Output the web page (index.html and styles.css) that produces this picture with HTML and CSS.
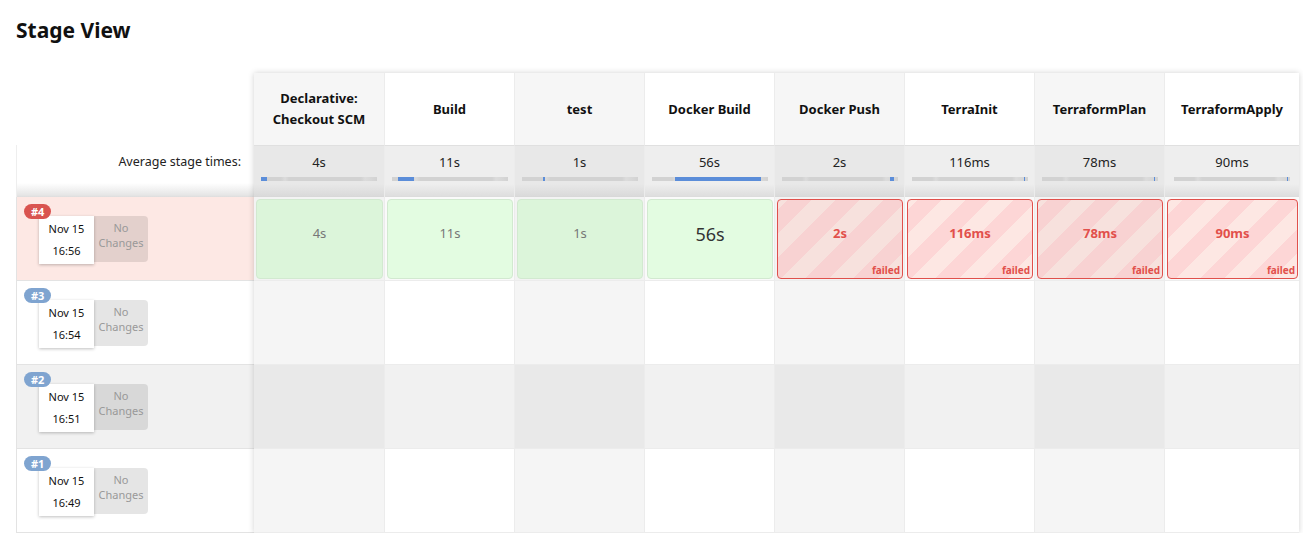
FILE: index.html
```html
<!DOCTYPE html>
<html>
<head>
<meta charset="utf-8">
<link rel="stylesheet" href="styles.css">
</head>
<body>
<h1 class="title">Stage View</h1>
<div class="view">
  <div class="builds">
    <div class="builds-head"></div>
    <div class="builds-avg">Average stage times:</div>
    <div class="build build-failed">
      <div class="card">
        <span class="badge badge-red">#4</span>
        <div class="date"><span>Nov 15</span><span>16:56</span></div>
        <div class="changes">No<br>Changes</div>
      </div>
    </div>
    <div class="build">
      <div class="card">
        <span class="badge">#3</span>
        <div class="date"><span>Nov 15</span><span>16:54</span></div>
        <div class="changes">No<br>Changes</div>
      </div>
    </div>
    <div class="build build-alt">
      <div class="card">
        <span class="badge">#2</span>
        <div class="date"><span>Nov 15</span><span>16:51</span></div>
        <div class="changes">No<br>Changes</div>
      </div>
    </div>
    <div class="build">
      <div class="card">
        <span class="badge">#1</span>
        <div class="date"><span>Nov 15</span><span>16:49</span></div>
        <div class="changes">No<br>Changes</div>
      </div>
    </div>
  </div>
  <div class="stages">
    <div class="row head">
      <div class="cell">Declarative:<br>Checkout SCM</div>
      <div class="cell">Build</div>
      <div class="cell">test</div>
      <div class="cell">Docker Build</div>
      <div class="cell">Docker Push</div>
      <div class="cell">TerraInit</div>
      <div class="cell">TerraformPlan</div>
      <div class="cell">TerraformApply</div>
    </div>
    <div class="row avg">
      <div class="cell"><span class="avg-time">4s</span><div class="bar"><div class="fill" style="margin-left:0px;width:6px"></div></div></div>
      <div class="cell"><span class="avg-time">11s</span><div class="bar"><div class="fill" style="margin-left:6px;width:16px"></div></div></div>
      <div class="cell"><span class="avg-time">1s</span><div class="bar"><div class="fill" style="margin-left:21px;width:2px"></div></div></div>
      <div class="cell"><span class="avg-time">56s</span><div class="bar"><div class="fill" style="margin-left:23px;width:86px"></div></div></div>
      <div class="cell"><span class="avg-time">2s</span><div class="bar"><div class="fill" style="margin-left:108px;width:4px"></div></div></div>
      <div class="cell"><span class="avg-time">116ms</span><div class="bar"><div class="fill" style="margin-left:112px;width:1px"></div></div></div>
      <div class="cell"><span class="avg-time">78ms</span><div class="bar"><div class="fill" style="margin-left:112px;width:1px"></div></div></div>
      <div class="cell"><span class="avg-time">90ms</span><div class="bar"><div class="fill" style="margin-left:113px;width:1px"></div></div></div>
    </div>
    <div class="row run run-failed">
      <div class="cell"><div class="box ok"><span class="dur">4s</span></div></div>
      <div class="cell"><div class="box ok"><span class="dur">11s</span></div></div>
      <div class="cell"><div class="box ok"><span class="dur">1s</span></div></div>
      <div class="cell"><div class="box ok"><span class="dur dur-long">56s</span></div></div>
      <div class="cell"><div class="box fail"><span class="dur">2s</span><span class="status">failed</span></div></div>
      <div class="cell"><div class="box fail"><span class="dur">116ms</span><span class="status">failed</span></div></div>
      <div class="cell"><div class="box fail"><span class="dur">78ms</span><span class="status">failed</span></div></div>
      <div class="cell"><div class="box fail"><span class="dur">90ms</span><span class="status">failed</span></div></div>
    </div>
    <div class="row run">
      <div class="cell"></div><div class="cell"></div><div class="cell"></div><div class="cell"></div>
      <div class="cell"></div><div class="cell"></div><div class="cell"></div><div class="cell"></div>
    </div>
    <div class="row run run-alt">
      <div class="cell"></div><div class="cell"></div><div class="cell"></div><div class="cell"></div>
      <div class="cell"></div><div class="cell"></div><div class="cell"></div><div class="cell"></div>
    </div>
    <div class="row run">
      <div class="cell"></div><div class="cell"></div><div class="cell"></div><div class="cell"></div>
      <div class="cell"></div><div class="cell"></div><div class="cell"></div><div class="cell"></div>
    </div>
  </div>
</div>
</body>
</html>
```

FILE: styles.css
```css
* { box-sizing: border-box; }

body {
  margin: 0;
  padding: 15px 0 0 16px;
  font-family: "Noto Sans", "Open Sans", sans-serif;
  color: #333;
  background: #fff;
}

.title {
  margin: 0;
  font-size: 21px;
  line-height: 30px;
  font-weight: 700;
  color: #111;
}

.view {
  display: flex;
  margin-top: 28px;
  width: 1283px;
}

/* left column */
.builds {
  width: 238px;
  flex: none;
  display: flex;
  flex-direction: column;
}

.builds-head {
  height: 72px;
}

.builds-avg {
  height: 52px;
  border-left: 1px solid #eee;
  padding: 8px 13px 0 0;
  text-align: right;
  font-size: 12.5px;
  line-height: 18px;
  color: #222;
  background: linear-gradient(to bottom, #fff 0, #fff 38px, #e6e6e6 50px, #ddd 52px);
}

.build {
  height: 84px;
  border-left: 1px solid #e3e3e3;
  border-bottom: 1px solid #e3e3e3;
  padding: 19px 0 0 22px;
  background: #fff;
}

.build-failed { background: #fde8e4; }
.build-alt { background: #f1f1f1; }

.card {
  position: relative;
  display: flex;
  align-items: flex-start;
}

.badge {
  position: absolute;
  left: -15px;
  top: -12px;
  z-index: 2;
  height: 15px;
  padding: 0 7px;
  border-radius: 8px;
  background: #7fa4d0;
  color: #fff;
  font-size: 11px;
  line-height: 15px;
  font-weight: 700;
}

.badge-red { background: #d9534f; }

.date {
  width: 55px;
  height: 48px;
  background: #fff;
  box-shadow: 0 1px 3px rgba(0,0,0,0.25);
  display: flex;
  flex-direction: column;
  align-items: center;
  justify-content: space-around;
  padding: 2px 0 2px;
  font-size: 11px;
  line-height: 14px;
  color: #111;
  position: relative;
  z-index: 1;
}

.changes {
  width: 54px;
  height: 46px;
  background: rgba(0,0,0,0.1);
  border-radius: 0 4px 4px 0;
  text-align: center;
  font-size: 11px;
  line-height: 15px;
  padding-top: 4px;
  color: #999;
}

/* stage table */
.stages {
  flex: 1;
  box-shadow: 0 0 6px rgba(0,0,0,0.18);
  background: #fff;
}

.row {
  display: grid;
  grid-template-columns: 131px repeat(6, 130px) 1fr;
}

.cell {
  border-right: 1px solid #ececec;
}

.cell:last-child { border-right: none; }

.head .cell {
  height: 72px;
  display: flex;
  align-items: center;
  justify-content: center;
  text-align: center;
  font-size: 13px;
  line-height: 21px;
  font-weight: 700;
  color: #111;
  background: #fff;
}

.head .cell:nth-child(odd) { background: #f6f6f6; }

.avg .cell {
  height: 52px;
  display: flex;
  flex-direction: column;
  align-items: center;
  padding-top: 7px;
  background: linear-gradient(to bottom, #eeeeee 0, #eeeeee 38px, #dedede 50px, #d6d6d6 52px);
  border-top: 1px solid #e0e0e0;
}

.avg .cell:nth-child(odd) {
  background: linear-gradient(to bottom, #e8e8e8 0, #e8e8e8 38px, #dadada 50px, #d2d2d2 52px);
}

.avg-time {
  font-size: 13px;
  line-height: 18px;
  color: #222;
}

.bar {
  margin-top: 6px;
  width: 116px;
  height: 4px;
  background: linear-gradient(to right, #d2d2d2 0, #d2d2d2 20px, #dcdcdc 24px, #d2d2d2 28px, #d2d2d2 100px, #dcdcdc 104px, #d2d2d2 116px);
  display: flex;
}

.fill {
  height: 4px;
  background: #5b8dd9;
}

.run .cell {
  height: 84px;
  border-bottom: 1px solid #ececec;
  background: #fff;
}

.run .cell:nth-child(odd) { background: #f5f5f5; }

.run-alt .cell { background: #f1f1f1; }
.run-alt .cell:nth-child(odd) { background: #e9e9e9; }

.run-failed .cell {
  padding: 2px 1px 1px 2px;
  background: #fafafa;
}

.run-failed .cell:nth-child(odd) { background: #f3f3f3; }

.box {
  position: relative;
  height: 100%;
  border-radius: 4px;
  display: flex;
  justify-content: center;
  padding-top: 24px;
}

.ok {
  background: #e3fce1;
  border: 1px solid #d2e9d0;
}

.run .cell:nth-child(odd) .ok { background: #dcf5da; }

.dur {
  font-size: 13px;
  line-height: 18px;
  color: #777;
}

.dur-long {
  font-size: 18px;
  line-height: 20px;
  color: #333;
  padding-top: 0;
}

.fail {
  border: 1px solid #e0504b;
  background: repeating-linear-gradient(-45deg, #fde7e3 0, #fde7e3 17px, #fdd6d6 17px, #fdd6d6 34px);
}

.run .cell:nth-child(odd) .fail {
  background: repeating-linear-gradient(-45deg, #f7e1dd 0, #f7e1dd 17px, #f8d2d2 17px, #f8d2d2 34px);
}

.fail .dur {
  font-weight: 700;
  color: #e2504b;
}

.status {
  position: absolute;
  right: 2px;
  bottom: 2px;
  font-size: 10px;
  line-height: 12px;
  font-weight: 700;
  color: #e2504b;
}
```
